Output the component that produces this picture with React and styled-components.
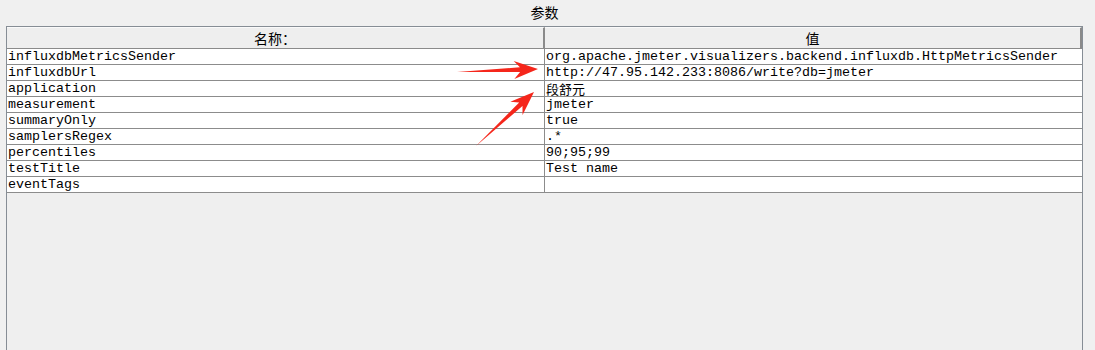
import React from "react";
import styled, { createGlobalStyle } from "styled-components";

const GlobalStyle = createGlobalStyle`
  html, body {
    margin: 0;
    padding: 0;
    background: #f0f0f0;
  }
`;

const Page = styled.div`
  position: relative;
  width: 1095px;
  height: 350px;
  overflow: hidden;
  background: #f0f0f0;
  padding: 0 12px 0 6px;
  box-sizing: border-box;
  display: flex;
  flex-direction: column;
`;

const Title = styled.div`
  height: 26px;
  display: flex;
  align-items: center;
  justify-content: center;
  font-family: "Noto Sans CJK SC", "Liberation Sans", sans-serif;
  font-size: 14px;
  color: #000;
  padding-bottom: 2px;
  box-sizing: border-box;
`;

const Frame = styled.div`
  flex: 1;
  border: 1px solid #868d95;
  border-bottom: none;
  background: #efefef;
`;

const Grid = styled.div`
  display: grid;
  grid-template-columns: 538px 1fr;
  color: #000;
`;

const HeadCell = styled.div`
  height: 22px;
  background: #eeeeee;
  border-top: 1px solid #fafafa;
  border-bottom: 1px solid #8a8a8a;
  border-right: 2px solid #8a8a8a;
  box-sizing: border-box;
  display: flex;
  align-items: center;
  justify-content: center;
  font-family: "Noto Sans CJK SC", "Liberation Sans", sans-serif;
  font-size: 14px;
  line-height: 1;
`;

const Cell = styled.div`
  height: 16px;
  background: #fff;
  border-bottom: 1px solid #8c8c8c;
  border-right: ${(p) => (p.$first ? "1px solid #8c8c8c" : "none")};
  box-sizing: border-box;
  padding: ${(p) => (p.$cjk ? "0 0 1px 1px" : "0 0 0 1px")};
  display: flex;
  align-items: center;
  line-height: ${(p) => (p.$cjk ? "13px" : "15px")};
  white-space: nowrap;
  overflow: hidden;
  font-family: ${(p) =>
    p.$cjk
      ? '"Noto Sans CJK SC", sans-serif'
      : '"Liberation Mono", monospace'};
  font-size: ${(p) => (p.$cjk ? "13px" : "13.33px")};
`;

const Overlay = styled.svg`
  position: absolute;
  left: 0;
  top: 0;
  pointer-events: none;
`;

const rows = [
  ["influxdbMetricsSender", "org.apache.jmeter.visualizers.backend.influxdb.HttpMetricsSender"],
  ["influxdbUrl", "http://47.95.142.233:8086/write?db=jmeter"],
  ["application", "段舒元"],
  ["measurement", "jmeter"],
  ["summaryOnly", "true"],
  ["samplersRegex", ".*"],
  ["percentiles", "90;95;99"],
  ["testTitle", "Test name"],
  ["eventTags", ""],
];

// red annotation arrow from tail (x1,y1) to tip (x2,y2)
function arrowPoints(x1, y1, x2, y2) {
  const dx = x2 - x1;
  const dy = y2 - y1;
  const len = Math.hypot(dx, dy);
  const ux = dx / len;
  const uy = dy / len;
  const nx = -uy;
  const ny = ux;
  const head = 22;
  const sx = x2 - ux * (head - 4);
  const sy = y2 - uy * (head - 4);
  const bx = x2 - ux * (head + 2);
  const by = y2 - uy * (head + 2);
  const pts = [
    [x1, y1],
    [sx - nx * 2.4, sy - ny * 2.4],
    [bx - nx * 9, by - ny * 9],
    [x2, y2],
    [bx + nx * 9, by + ny * 9],
    [sx + nx * 2.4, sy + ny * 2.4],
  ];
  return pts.map((p) => p.join(",")).join(" ");
}

export default function App() {
  return (
    <Page>
      <GlobalStyle />
      <Title>参数</Title>
      <Frame>
        <Grid>
          <HeadCell>名称：</HeadCell>
          <HeadCell>值</HeadCell>
          {rows.map(([name, value]) => (
            <React.Fragment key={name}>
              <Cell $first>{name}</Cell>
              <Cell $cjk={/[\u4e00-\u9fff]/.test(value)}>{value}</Cell>
            </React.Fragment>
          ))}
        </Grid>
      </Frame>
      <Overlay width="1095" height="350" viewBox="0 0 1095 350">
        <polygon points={arrowPoints(457, 72, 538, 69)} fill="#f5261b" />
        <polygon points={arrowPoints(476, 146, 534, 92)} fill="#f5261b" />
      </Overlay>
    </Page>
  );
}
